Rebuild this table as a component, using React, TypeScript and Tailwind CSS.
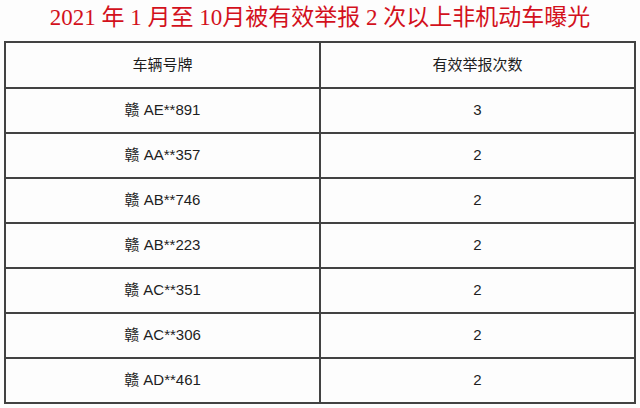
const rows: [string, string][] = [
  ['赣 AE**891', '3'],
  ['赣 AA**357', '2'],
  ['赣 AB**746', '2'],
  ['赣 AB**223', '2'],
  ['赣 AC**351', '2'],
  ['赣 AC**306', '2'],
  ['赣 AD**461', '2'],
];

const sans = "font-['Liberation_Sans','Noto_Sans_CJK_SC',sans-serif]";

export default function App() {
  return (
    <div className="w-[640px] h-[408px] bg-[#fdfdfd] px-[4px] overflow-hidden">
      <h1 className="h-[41px] pt-[3px] text-center text-[23px] leading-[30px] text-[#d3111c] font-['Liberation_Serif','Noto_Sans_CJK_SC',serif]">
        2021 年 1 月至 10月被有效举报 2 次以上非机动车曝光
      </h1>
      <table className={`w-[632px] border-collapse table-fixed text-[15px] text-[#1e1e1e] ${sans}`}>
        <colgroup>
          <col className="w-[315px]" />
          <col />
        </colgroup>
        <thead>
          <tr className="h-[46px]">
            <th className="border-2 border-[#424242] font-normal">车辆号牌</th>
            <th className="border-2 border-[#424242] font-normal">有效举报次数</th>
          </tr>
        </thead>
        <tbody>
          {rows.map(([plate, count]) => (
            <tr key={plate} className="h-[45px]">
              <td className="border-2 border-[#424242] text-center">{plate}</td>
              <td className="border-2 border-[#424242] text-center">{count}</td>
            </tr>
          ))}
        </tbody>
      </table>
    </div>
  );
}
